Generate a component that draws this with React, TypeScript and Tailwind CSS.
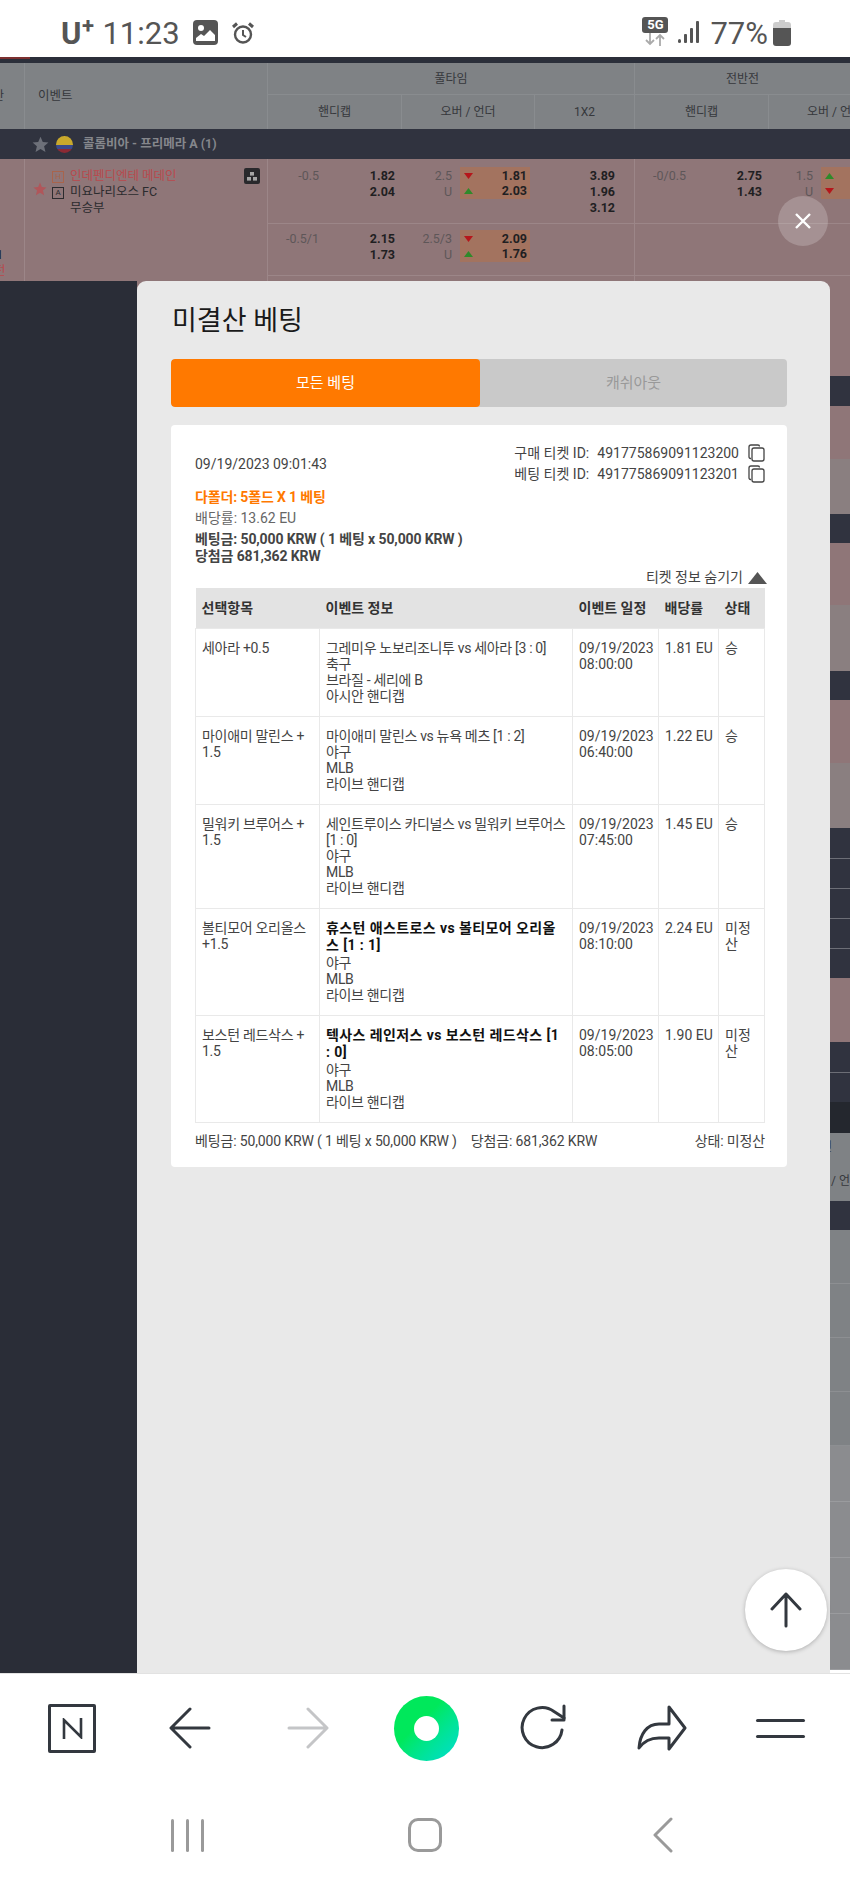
import { ReactNode } from 'react';

const betRows = [
  { pick: '세아라 +0.5', match: '그레미우 노보리조니투 vs 세아라 [3 : 0]', sport: '축구', league: '브라질 - 세리에 B', market: '아시안 핸디캡', date: '09/19/2023', time: '08:00:00', odds: '1.81 EU', status: '승', live: false },
  { pick: '마이애미 말린스 + 1.5', match: '마이애미 말린스 vs 뉴욕 메츠 [1 : 2]', sport: '야구', league: 'MLB', market: '라이브 핸디캡', date: '09/19/2023', time: '06:40:00', odds: '1.22 EU', status: '승', live: false },
  { pick: '밀워키 브루어스 + 1.5', match: '세인트루이스 카디널스 vs 밀워키 브루어스 [1 : 0]', sport: '야구', league: 'MLB', market: '라이브 핸디캡', date: '09/19/2023', time: '07:45:00', odds: '1.45 EU', status: '승', live: false },
  { pick: '볼티모어 오리올스 +1.5', match: '휴스턴 애스트로스 vs 볼티모어 오리올스 [1 : 1]', sport: '야구', league: 'MLB', market: '라이브 핸디캡', date: '09/19/2023', time: '08:10:00', odds: '2.24 EU', status: '미정산', live: true },
  { pick: '보스턴 레드삭스 + 1.5', match: '텍사스 레인저스 vs 보스턴 레드삭스 [1 : 0]', sport: '야구', league: 'MLB', market: '라이브 핸디캡', date: '09/19/2023', time: '08:05:00', odds: '1.90 EU', status: '미정산', live: true },
];

const Triangle = ({ up }: { up: boolean }) => (
  <svg width="9" height="6" viewBox="0 0 9 6">
    <path d={up ? 'M4.5 0 9 6H0z' : 'M0 0h9L4.5 6z'} fill={up ? '#2f8a2a' : '#b5161b'} />
  </svg>
);

const CopyIcon = () => (
  <svg width="17" height="18" viewBox="0 0 17 18" fill="none" stroke="#444" strokeWidth="1.3">
    <path d="M3 14.5H2.5A1.5 1.5 0 0 1 1 13V3a2 2 0 0 1 2-2h7a1.5 1.5 0 0 1 1.5 1.5" />
    <rect x="4" y="4" width="12" height="13" rx="2" />
  </svg>
);

// handicap cell: line label + two prices
const Handicap = ({ line, a, b, top }: { line: string; a: string; b: string; top: string }) => (
  <div className={`flex ${top}`}>
    <div className="w-[51px] text-right text-[#5e5658] whitespace-nowrap">{line}</div>
    <div className="w-[76px] text-right font-bold text-[#1f1f22]">
      <div>{a}</div>
      <div>{b}</div>
    </div>
  </div>
);

const OverUnder = ({ line, a, b, flip, top }: { line: string; a: string; b: string; flip?: boolean; top: string }) => (
  <div className={`flex ${top}`}>
    <div className="w-[51px] text-right text-[#5e5658] whitespace-nowrap">
      <div>{line}</div>
      <div>U</div>
    </div>
    <div className="-mt-[1px] ml-2 h-[32px] w-[70px] bg-[#a3735f] font-bold text-[#1f1f22] pl-[4px] pr-[3px]">
      <div className="flex items-center justify-between h-4 pt-[1px]">
        <Triangle up={!!flip} />
        <span>{a}</span>
      </div>
      <div className="flex items-center justify-between h-4">
        <Triangle up={!flip} />
        <span>{b}</span>
      </div>
    </div>
  </div>
);

const HeadCell = ({ className, children }: { className?: string; children: ReactNode }) => (
  <div className={`flex items-center justify-center border-l border-[#898c8f] ${className ?? ''}`}>{children}</div>
);

const Star = ({ size, color }: { size: number; color: string }) => (
  <svg width={size} height={size} viewBox="0 0 24 24" fill={color}>
    <path d="M12 1l3.2 7.6 8 .7-6.1 5.3 1.9 8L12 18.3 5 22.6l1.9-8L.8 9.3l8-.7z" />
  </svg>
);

const strip = [
  { h: 95, c: 'bg-[#8f7678]' },
  { h: 30, c: 'bg-[#30333f]' },
  { h: 53, c: 'bg-[#8f7678]' },
  { h: 55, c: 'bg-[#8a7f80]' },
  { h: 29, c: 'bg-[#30333f]' },
  { h: 62, c: 'bg-[#8f7678]' },
  { h: 66, c: 'bg-[#8a7f80]' },
  { h: 29, c: 'bg-[#30333f]' },
  { h: 63, c: 'bg-[#8f7678]' },
  { h: 65, c: 'bg-[#8a7f80]' },
  { h: 30, c: 'bg-[#30333f]' },
  { h: 30, c: 'bg-[#30333f] border-t border-[#6c6e76]' },
  { h: 30, c: 'bg-[#30333f] border-t border-[#6c6e76]' },
  { h: 30, c: 'bg-[#30333f] border-t border-[#6c6e76]' },
  { h: 30, c: 'bg-[#30333f] border-t border-[#6c6e76]' },
  { h: 64, c: 'bg-[#8f7678]' },
  { h: 30, c: 'bg-[#30333f]' },
  { h: 30, c: 'bg-[#30333f] border-t border-[#6c6e76]' },
  { h: 31, c: 'bg-[#24272e]' },
];

const App = () => {
  return (
    <div className="relative w-[850px] h-[1889px] overflow-hidden bg-white [font-family:Roboto,'Noto_Sans_CJK_KR',sans-serif]">
      {/* status bar */}
      <div className="flex h-[57px] items-center justify-between pl-[61px] pr-[59px] text-[#555]">
        <div className="flex items-center">
          <span className="relative text-[31px] font-bold leading-none mt-[9px]">U<span className="absolute -top-[3px] left-[21px] text-[22px]">+</span></span>
          <span className="ml-[21px] text-[31px] leading-none mt-[9px]">11:23</span>
          <svg className="ml-[13px] mt-2" width="25" height="25" viewBox="0 0 25 25">
            <rect width="25" height="25" rx="4" fill="#555" />
            <circle cx="8" cy="8" r="3" fill="#fff" />
            <path d="M3 21v-3l5-4 3 2 6-6 5 5v6z" fill="#fff" />
          </svg>
          <svg className="ml-[14px] mt-2" width="22" height="22" viewBox="0 0 22 22" fill="none" stroke="#555" strokeWidth="2.4">
            <circle cx="11" cy="12.5" r="8" />
            <path d="M11 8v5l3 2" strokeWidth="2" />
            <path d="M1 5l4-3.5M21 5l-4-3.5" strokeWidth="3" />
          </svg>
        </div>
        <div className="flex items-center">
          <div className="flex flex-col items-center mt-[6px]">
            <div className="flex h-[16px] w-[26px] items-center justify-center rounded-[3px] bg-[#555] text-[13px] font-bold text-white">5G</div>
            <svg width="20" height="13" viewBox="0 0 20 13" fill="none" stroke="#aaa" strokeWidth="1.8">
              <path d="M5 0v11M1 7l4 4 4-4" />
              <path d="M15 13V2M11 6l4-4 4 4" />
            </svg>
          </div>
          <svg className="ml-[10px] mt-2" width="22" height="23" viewBox="0 0 22 23" fill="#555">
            <rect x="0" y="18" width="3" height="4" rx="1.5" />
            <rect x="6" y="13" width="3" height="9" rx="1" />
            <rect x="12" y="7" width="3" height="15" rx="1" />
            <rect x="18" y="0" width="3" height="22" rx="1" />
          </svg>
          <span className="ml-[10px] text-[31px] leading-none mt-[9px]">77%</span>
          <svg className="ml-[5px] mt-2" width="18" height="26" viewBox="0 0 18 26">
            <path d="M6 0h6v2h3a3 3 0 0 1 3 3v3H0V5a3 3 0 0 1 3-3h3z" fill="#ccc" />
            <path d="M0 8h18v15a3 3 0 0 1-3 3H3a3 3 0 0 1-3-3z" fill="#555" />
          </svg>
        </div>
      </div>

      {/* page behind the dim layer */}
      <div className="flex h-[6px] bg-[#2b2f3a]">
        <div className="h-[2px] w-[30px] bg-[#7d3030]" />
      </div>
      <div className="grid h-[66px] grid-cols-[24px_243px_367px_216px] bg-[#7f8285] text-[12px] text-[#36383c]">
        <div className="flex items-center justify-end pr-[20px] overflow-hidden">
          <span className="shrink-0">간</span>
        </div>
        <div className="flex items-center border-l border-[#898c8f] pl-[13px] text-[12.5px]">이벤트</div>
        <div className="flex flex-col">
          <HeadCell className="h-[32px] border-b">풀타임</HeadCell>
          <div className="grid flex-1 grid-cols-[134px_133px_100px]">
            <HeadCell>핸디캡</HeadCell>
            <HeadCell>오버 / 언더</HeadCell>
            <HeadCell>1X2</HeadCell>
          </div>
        </div>
        <div className="flex flex-col">
          <HeadCell className="h-[32px] border-b">전반전</HeadCell>
          <div className="grid flex-1 grid-cols-[134px_82px]">
            <HeadCell>핸디캡</HeadCell>
            <div className="flex items-center whitespace-nowrap overflow-hidden border-l border-[#898c8f] pl-[38px]">오버 / 언더</div>
          </div>
        </div>
      </div>
      <div className="flex h-[30px] items-center bg-[#30333f] pl-[32px] text-[12.5px] font-bold text-[#85878c]">
        <Star size={17} color="#6d7079" />
        <div className="ml-[7px] flex h-[17px] w-[17px] flex-col overflow-hidden rounded-full">
          <div className="h-[9px] bg-[#c9a92c]" />
          <div className="h-[4px] bg-[#3a4a8c]" />
          <div className="h-[4px] bg-[#8c2a34]" />
        </div>
        <span className="ml-[10px]">콜롬비아 - 프리메라 A (1)</span>
      </div>

      <div className="grid h-[122px] grid-cols-[24px_243px_134px_133px_100px_134px_82px] grid-rows-[64px_52px_6px] bg-[#8f7678] text-[12.5px] leading-4">
        <div className="row-span-3 relative overflow-hidden">
          <span className="absolute right-[21px] top-[88px] font-bold text-[#1f1f22]">1</span>
          <span className="absolute -left-[6px] top-[104px] text-[#b8494d]">전</span>
        </div>
        <div className="row-span-3 relative border-l border-[#9c8688] flex pl-[8px] pt-[9px]">
          <div className="mt-[14px] mr-[5px]">
            <Star size={14} color="#b0565a" />
          </div>
          <div className="flex flex-col gap-[4px] mt-[3px] mr-[6px]">
            <div className="flex h-[12px] w-[12px] items-center justify-center border border-[#a8644c] text-[8px] text-[#a8644c]">H</div>
            <div className="flex h-[12px] w-[12px] items-center justify-center border border-[#2b2b2e] text-[8px] text-[#2b2b2e]">A</div>
          </div>
          <div className="whitespace-nowrap text-[#2b2b2e]">
            <div className="text-[#b8494d]">인데펜디엔테 메데인</div>
            <div>미요나리오스 FC</div>
            <div>무승부</div>
          </div>
          <div className="absolute right-[7px] top-[9px] flex h-[16px] w-[16px] items-center justify-center rounded-[2px] bg-[#29292c]">
            <svg width="10" height="9" viewBox="0 0 10 9" fill="#a5a5a5">
              <rect x="3" y="0" width="4" height="3.6" />
              <rect x="0" y="5" width="4" height="3.6" />
              <rect x="6" y="5" width="4" height="3.6" />
            </svg>
          </div>
        </div>
        <div className="border-l border-[#9c8688]"><Handicap top="pt-[9px]" line="-0.5" a="1.82" b="2.04" /></div>
        <OverUnder top="pt-[9px]" line="2.5" a="1.81" b="2.03" />
        <div className="pt-[9px] pr-[19px] text-right font-bold text-[#1f1f22]">
          <div>3.89</div>
          <div>1.96</div>
          <div>3.12</div>
        </div>
        <div className="border-l border-[#9c8688]"><Handicap top="pt-[9px]" line="-0/0.5" a="2.75" b="1.43" /></div>
        <div className="overflow-hidden"><div className="w-[140px] -ml-[6px]"><OverUnder top="pt-[9px]" line="1.5" a="" b="" flip /></div></div>

        <div className="border-t border-l border-[#9c8688]"><Handicap top="pt-[7px]" line="-0.5/1" a="2.15" b="1.73" /></div>
        <div className="border-t border-[#9c8688]"><OverUnder top="pt-[7px]" line="2.5/3" a="2.09" b="1.76" /></div>
        <div className="border-t border-[#9c8688]" />
        <div className="border-t border-l border-[#9c8688]" />
        <div className="border-t border-[#9c8688]" />

        <div className="col-span-3 border-t border-l border-[#9c8688]" />
        <div className="col-span-2 border-t border-l border-[#9c8688]" />
      </div>

      {/* dark side panel, modal, sliver of page on the right */}
      <div className="flex h-[1392px]">
        <div className="w-[137px] bg-[#2a2d37]" />
        <div className="w-[693px] bg-[#8f7678]">
          <div className="h-full rounded-t-[9px] bg-[#e9e9e9] px-[34px] text-[14px] text-[#444]">
            <h1 className="pt-[22px] pl-[1px] text-[27px] leading-[36px] text-[#1a1a1a]">미결산 베팅</h1>
            <div className="mt-[20px] flex h-[48px] overflow-hidden rounded-[4px] bg-[#c9c9c9] w-[616px]">
              <div className="flex w-[309px] items-center justify-center rounded-[4px] bg-[#ff7900] text-[15px] text-white">모든 베팅</div>
              <div className="flex flex-1 items-center justify-center text-[15px] text-[#999]">캐쉬아웃</div>
            </div>

            <div className="mt-[18px] h-[742px] w-[616px] rounded-[4px] bg-white pl-[24px] pr-[22px]">
              <div className="flex items-center justify-between pt-[19px]">
                <div className="mt-[2px]">09/19/2023 09:01:43</div>
                <div className="flex flex-col gap-[3px]">
                  <div className="flex items-center leading-[17px]">
                    <span className="w-[83px]">구매 티켓 ID:</span>
                    <span>491775869091123200</span>
                    <span className="ml-[9px]"><CopyIcon /></span>
                  </div>
                  <div className="flex items-center leading-[17px]">
                    <span className="w-[83px]">베팅 티켓 ID:</span>
                    <span>491775869091123201</span>
                    <span className="ml-[9px]"><CopyIcon /></span>
                  </div>
                </div>
              </div>
              <div className="mt-[6px] font-bold leading-[17px] tracking-[-0.15px] text-[#ff7900]">다폴더: 5폴드 X 1 베팅</div>
              <div className="mt-[4px] leading-[17px] text-[#666]">배당률: 13.62 EU</div>
              <div className="mt-[4px] font-bold leading-[17px] tracking-[-0.12px] text-[#444]">베팅금: 50,000 KRW ( 1 베팅 x 50,000 KRW )</div>
              <div className="font-bold leading-[17px] tracking-[-0.12px] text-[#444]">당첨금 681,362 KRW</div>
              <div className="mt-[4px] -mr-[2px] flex items-center justify-end leading-[17px]">
                티켓 정보 숨기기
                <svg className="ml-[5px]" width="19" height="12" viewBox="0 0 19 12">
                  <path d="M9.5 0 19 12H0z" fill="#555" />
                </svg>
              </div>

              <table className="mt-[2px] w-[569px] table-fixed border-collapse leading-4">
                <colgroup>
                  <col className="w-[124px]" />
                  <col className="w-[253px]" />
                  <col className="w-[86px]" />
                  <col className="w-[60px]" />
                  <col className="w-[46px]" />
                </colgroup>
                <thead>
                  <tr className="h-[40px] bg-[#e3e3e3] text-left text-[#333]">
                    <th className="px-[6px] font-bold">선택항목</th>
                    <th className="px-[6px] font-bold">이벤트 정보</th>
                    <th className="px-[6px] font-bold whitespace-nowrap">이벤트 일정</th>
                    <th className="px-[6px] font-bold whitespace-nowrap">배당률</th>
                    <th className="px-[6px] font-bold">상태</th>
                  </tr>
                </thead>
                <tbody>
                  {betRows.map((row) => (
                    <tr key={row.match}>
                      <td className="border border-[#e9e9e9] px-[6px] pt-[11px] pb-[12px] align-top tracking-[-0.3px]">{row.pick}</td>
                      <td className="border border-[#e9e9e9] px-[6px] pt-[11px] pb-[12px] align-top tracking-[-0.33px]">
                        <div className={row.live ? 'font-bold text-[#111] leading-[17.5px] tracking-[0.4px]' : ''}>{row.match}</div>
                        <div>{row.sport}</div>
                        <div>{row.league}</div>
                        <div>{row.market}</div>
                      </td>
                      <td className="border border-[#e9e9e9] px-[6px] pt-[11px] pb-[12px] align-top whitespace-nowrap">
                        {row.date}
                        <br />
                        {row.time}
                      </td>
                      <td className="border border-[#e9e9e9] px-[6px] pt-[11px] pb-[12px] align-top whitespace-nowrap">{row.odds}</td>
                      <td className="border border-[#e9e9e9] px-[6px] pt-[11px] pb-[12px] align-top">{row.status}</td>
                    </tr>
                  ))}
                </tbody>
              </table>

              <div className="mt-[10px] flex justify-between leading-[17px] tracking-[-0.15px]">
                <div>
                  베팅금: 50,000 KRW ( 1 베팅 x 50,000 KRW )
                  <span className="ml-[14px]">당첨금: 681,362 KRW</span>
                </div>
                <div>상태: 미정산</div>
              </div>
            </div>
          </div>
        </div>
        <div className="flex w-[20px] flex-col overflow-hidden text-[12px] text-[#36383c]">
          {strip.map((s, i) => (
            <div key={i} style={{ height: s.h }} className={s.c} />
          ))}
          <div className="flex h-[28px] items-center whitespace-nowrap bg-[#7f8285]"><span className="-ml-[9px]">전</span></div>
          <div className="flex h-[40px] items-center whitespace-nowrap bg-[#7f8285] pl-[1px]">/ 언</div>
          <div className="h-[29px] bg-[#30333f]" />
          {[0, 1, 2, 3].map((i) => (
            <div key={i} className="h-[54px] border-b border-[#8d8f92] bg-[#7f8285]" />
          ))}
          {[0, 1, 2, 3].map((i) => (
            <div key={i} className="h-[56px] border-b border-[#9a9b9e] bg-[#8b8c8f]" />
          ))}
        </div>
      </div>

      {/* browser toolbar */}
      <div className="grid h-[112px] grid-cols-7 pl-[13px] pr-[11px] pb-[3px] border-t border-[#e2e2e2]">
        <div className="flex items-center justify-center">
          <div className="flex h-[49px] w-[48px] items-center justify-center border-[3px] border-[#33383f] rounded-[2px]">
            <svg width="21" height="21" viewBox="0 0 21 21" fill="none" stroke="#33383f" strokeWidth="2.6">
              <path d="M2 21V2l17 17V0" />
            </svg>
          </div>
        </div>
        <div className="flex items-center justify-center">
          <svg width="42" height="42" viewBox="0 0 42 42" fill="none" stroke="#33383f" strokeWidth="3" strokeLinecap="round" strokeLinejoin="round">
            <path d="M40 21H3M21 2 2 21l19 19" />
          </svg>
        </div>
        <div className="flex items-center justify-center">
          <svg width="42" height="42" viewBox="0 0 42 42" fill="none" stroke="#c4c5c7" strokeWidth="3" strokeLinecap="round" strokeLinejoin="round">
            <path d="M2 21h37M21 2l19 19-19 19" />
          </svg>
        </div>
        <div className="flex items-center justify-center">
          <div className="flex h-[65px] w-[65px] items-center justify-center rounded-full bg-gradient-to-br from-[#00e85b] from-40% to-[#00dcd0]">
            <div className="h-[25px] w-[25px] rounded-full bg-white" />
          </div>
        </div>
        <div className="flex items-center justify-center">
          <svg width="48" height="48" viewBox="0 0 48 48" fill="none" stroke="#33383f" strokeWidth="3" strokeLinecap="round" strokeLinejoin="round">
            <path d="M42 26a20 20 0 1 1-8-18.5L44 14" />
            <path d="M44 2v14H32" />
          </svg>
        </div>
        <div className="flex items-center justify-center">
          <svg width="50" height="46" viewBox="0 0 50 46" fill="none" stroke="#33383f" strokeWidth="3" strokeLinejoin="round" strokeLinecap="round">
            <path d="M32 2l16 21-16 21V33H22c-9 0-15 3-20 10 1-14 8-24 20-24h10z" />
          </svg>
        </div>
        <div className="flex flex-col items-center justify-center gap-[13px]">
          <div className="h-[3px] w-[49px] rounded bg-[#33383f]" />
          <div className="h-[3px] w-[49px] rounded bg-[#33383f]" />
        </div>
      </div>

      {/* system navigation */}
      <div className="grid h-[104px] grid-cols-3 px-[68px] pb-[4px]">
        <div className="flex items-center justify-center gap-[12px]">
          <div className="h-[33px] w-[3px] rounded bg-[#9a9a9a]" />
          <div className="h-[33px] w-[3px] rounded bg-[#9a9a9a]" />
          <div className="h-[33px] w-[3px] rounded bg-[#9a9a9a]" />
        </div>
        <div className="flex items-center justify-center">
          <div className="h-[34px] w-[34px] rounded-[10px] border-[3px] border-[#9a9a9a]" />
        </div>
        <div className="flex items-center justify-center">
          <svg width="20" height="36" viewBox="0 0 20 36" fill="none" stroke="#9a9a9a" strokeWidth="3" strokeLinecap="round" strokeLinejoin="round">
            <path d="M18 2 2 18l16 16" />
          </svg>
        </div>
      </div>

      {/* floating buttons */}
      <div className="absolute left-[778px] top-[196px] flex h-[50px] w-[50px] items-center justify-center rounded-full bg-white/20">
        <svg width="18" height="18" viewBox="0 0 18 18" stroke="#fff" strokeWidth="2.4">
          <path d="M2 2l14 14M16 2 2 16" />
        </svg>
      </div>
      <div className="absolute left-[745px] top-[1569px] flex h-[82px] w-[82px] items-center justify-center rounded-full bg-white shadow-[0_1px_4px_rgba(0,0,0,0.25)]">
        <svg width="32" height="36" viewBox="0 0 32 36" fill="none" stroke="#33383f" strokeWidth="3" strokeLinecap="round" strokeLinejoin="round">
          <path d="M16 34V2M2 17 16 2l14 15" />
        </svg>
      </div>
    </div>
  );
};

export default App;
